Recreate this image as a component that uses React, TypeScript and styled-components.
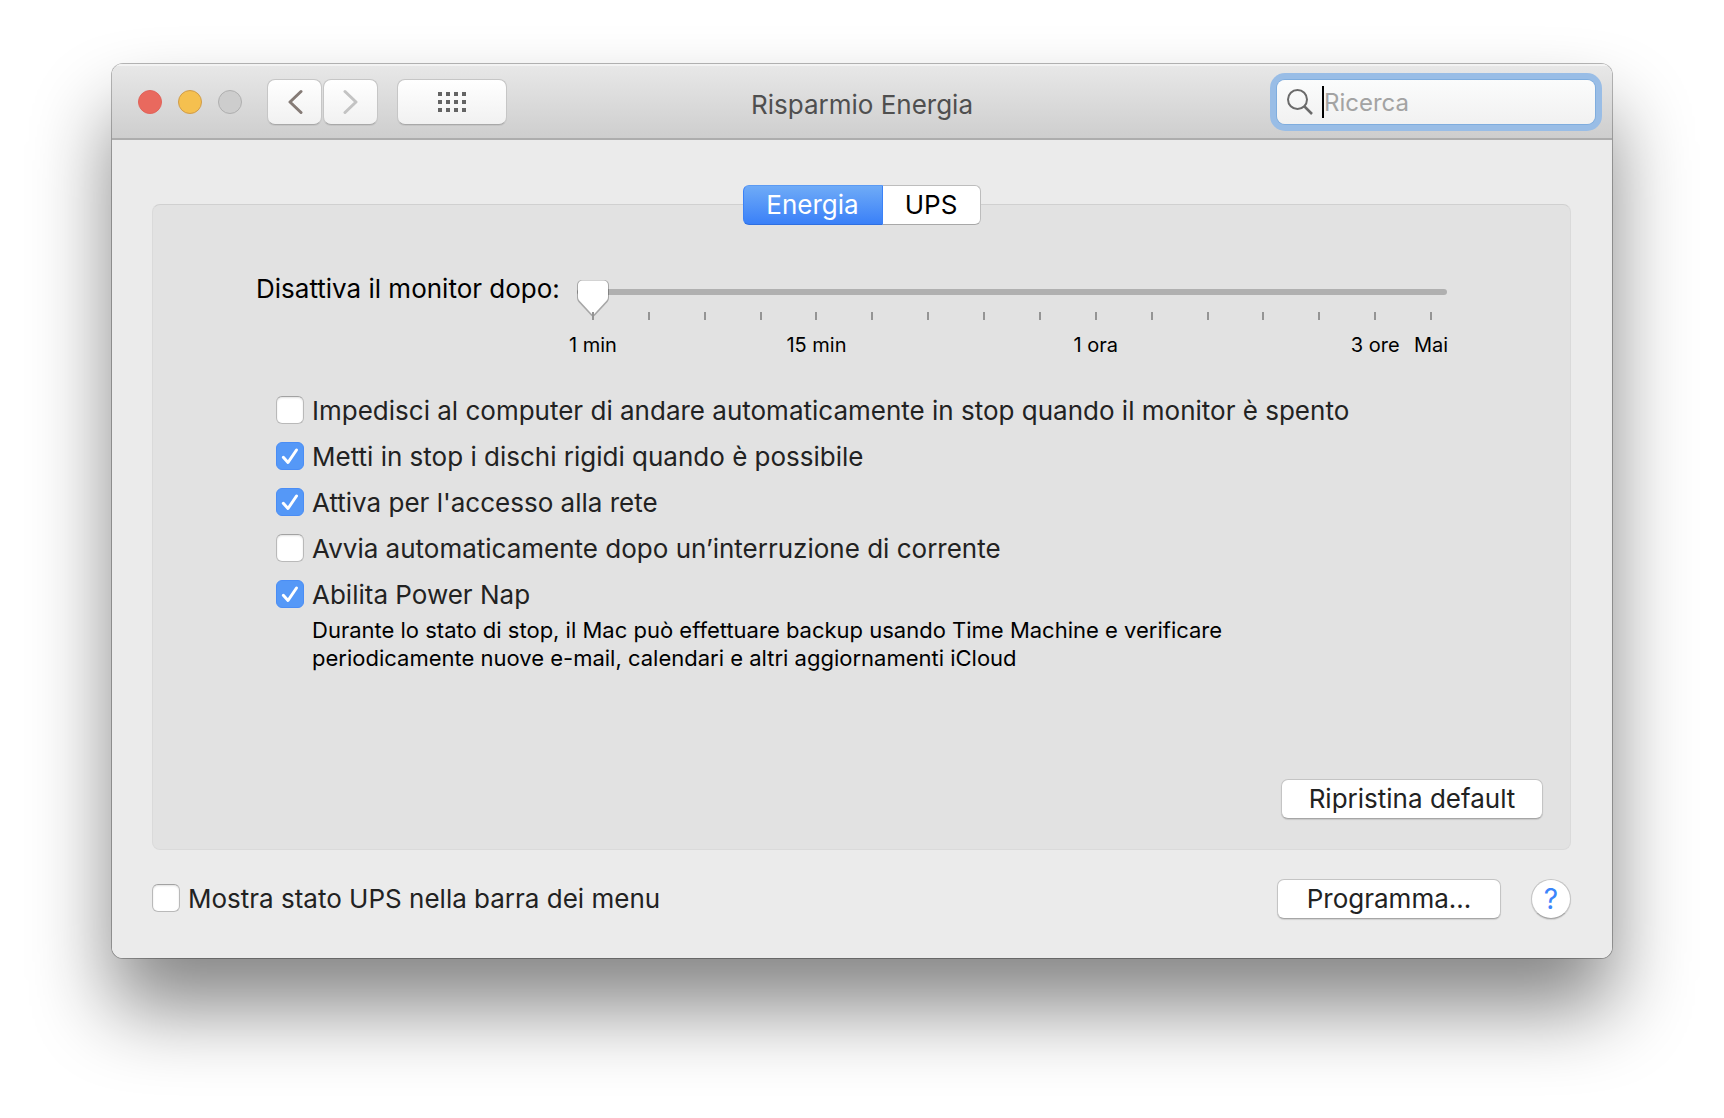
import React, { useState } from "react";
import styled, { createGlobalStyle, css } from "styled-components";

const GlobalStyle = createGlobalStyle`
  *, *::before, *::after { box-sizing: border-box; }
  body {
    margin: 0;
    background: #fff;
    font-family: Inter, "Liberation Sans", sans-serif;
    color: #222;
  }
  button, input { font-family: inherit; }
`;

const THUMB = encodeURIComponent(
  `<svg xmlns="http://www.w3.org/2000/svg" width="32" height="38" viewBox="0 0 32 38"><path d="M5 1h22a5 5 0 0 1 5 5v13q0 2-1.500 4L18 36.500q-2 2-4 0L1.500 23Q0 21 0 19V6a5 5 0 0 1 5-5z" fill="#000" fill-opacity=".26"/><path d="M5.500 1.500h21a4.500 4.500 0 0 1 4.500 4.500V18q0 2-1.300 3.500L17 35.200q-1 1-2 0L2.300 21.500Q1 20 1 18V6a4.500 4.500 0 0 1 4.500-4.500z" fill="#fff"/></svg>`
);

const Desktop = styled.div`
  min-height: 100vh;
  padding: 64px 112px 160px;
`;

const Window = styled.main`
  border-radius: 11px;
  background: #ebebeb;
  overflow: hidden;
`;

const WindowShadow = styled.div`
  border-radius: 11px;
  box-shadow: 0 0 0 1px rgba(0, 0, 0, 0.28), 0 50px 80px rgba(0, 0, 0, 0.48);
`;

const TitleBar = styled.header`
  display: grid;
  grid-template-columns: 1fr auto 1fr;
  align-items: center;
  height: 76px;
  padding: 2px 17px 0;
  background: linear-gradient(#e8e8e8, #cecece);
  border-bottom: 2px solid #adadad;
  box-shadow: inset 0 2px 0 #f3f3f3;
`;

const Group = styled.div<{ $gap: number }>`
  display: flex;
  align-items: center;
  gap: ${(p) => p.$gap}px;
`;

const Lights = styled(Group)`
  padding-left: 9px;
`;

const Light = styled.button<{ $fill: string; $edge: string }>`
  width: 24px;
  height: 24px;
  padding: 0;
  border: 1px solid ${(p) => p.$edge};
  border-radius: 50%;
  background: ${(p) => p.$fill};
`;

const NavButtons = styled.div`
  display: flex;
  gap: 1px;
  margin: 0 19px 0 25px;
`;

const ToolButton = styled.button<{ $wide?: boolean }>`
  display: flex;
  align-items: center;
  justify-content: center;
  width: ${(p) => (p.$wide ? 110 : 55)}px;
  height: 46px;
  padding: 0;
  border: 1px solid #c6c6c6;
  border-bottom-color: #a9a9a9;
  border-radius: 8px;
  background: linear-gradient(#fff, #f1f1f1);
  box-shadow: 0 1px 0 rgba(0, 0, 0, 0.06);
`;

const Title = styled.h1`
  margin: 0;
  padding-top: 6px;
  font-size: 26px;
  line-height: 32px;
  font-weight: 400;
  color: #4f4f4f;
`;

const SearchBox = styled.label`
  display: flex;
  align-items: center;
  justify-self: end;
  width: 318px;
  height: 44px;
  padding: 0 10px;
  border-radius: 8px;
  background: linear-gradient(#fbfcfc, #f1f1f1);
  box-shadow: 0 0 0 1px #7fadde, 0 0 0 7px #99bde6;
`;

const Caret = styled.span`
  flex: none;
  width: 2px;
  height: 32px;
  margin-left: 9px;
  background: #000;
`;

const SearchInput = styled.input`
  flex: 1;
  min-width: 0;
  padding: 2px 0 0;
  border: 0;
  outline: 0;
  background: none;
  font-size: 24px;
  line-height: 32px;
  color: #222;
  &::placeholder { color: #a3a3a3; opacity: 1; }
`;

const Body = styled.div`
  padding: 45px 41px 39px 40px;
`;

const Tabs = styled.div`
  position: relative;
  display: flex;
  width: max-content;
  margin: 0 auto -21px;
`;

const Tab = styled.button<{ $active: boolean }>`
  height: 40px;
  padding: 0;
  border: 1px solid #bdbdbd;
  border-bottom-color: #a8a8a8;
  background: #fff;
  font-size: 26px;
  line-height: 32px;
  color: #000;
  &:first-child { border-radius: 6px 0 0 6px; width: 140px; }
  &:last-child { border-radius: 0 6px 6px 0; width: 98px; border-left: 0; }
  ${(p) =>
    p.$active &&
    css`
      border-color: #5b9af3 #3b82f7 #2f6fe0;
      background: linear-gradient(#6fabf7, #3a80f8);
      color: #fff;
    `}
`;

const Panel = styled.section`
  display: flex;
  flex-direction: column;
  padding: 68px 27px 30px 103px;
  border: 1px solid #dadada;
  border-top-color: #d0d0d0;
  border-radius: 8px;
  background: #e2e2e2;
`;

const SliderRow = styled.div`
  display: flex;
  align-items: flex-start;
  gap: 19px;
  padding-right: 96px;
`;

const SliderLabel = styled.label`
  flex: none;
  width: 302px;
  font-size: 26px;
  line-height: 32px;
  white-space: nowrap;
  color: #000;
`;

const Slider = styled.div`
  flex: 1;
  min-width: 0;
`;

const Range = styled.input`
  display: block;
  appearance: none;
  width: 100%;
  height: 38px;
  margin: 0;
  background: none;
  &::-webkit-slider-runnable-track {
    height: 6px;
    border-radius: 3px;
    background: #b0b0b0;
  }
  &::-webkit-slider-thumb {
    appearance: none;
    width: 32px;
    height: 38px;
    margin-top: -10px;
    border: 0;
    background: url("data:image/svg+xml,${THUMB}") center / contain no-repeat;
  }
`;

const Marks = styled.div`
  display: grid;
  grid-template-columns: repeat(16, minmax(0, 1fr));
  margin: 1px -12px 0;
`;

const Mark = styled.span`
  display: flex;
  flex-direction: column;
  align-items: center;
  gap: 11px;
  font-size: 20px;
  line-height: 28px;
  white-space: nowrap;
  color: #000;
  &::before {
    content: "";
    width: 2px;
    height: 8px;
    background: #949494;
  }
`;

const Options = styled.div`
  display: flex;
  flex-direction: column;
  gap: 14px;
  margin: 36px 0 0 20px;
`;

const CheckLabel = styled.label`
  display: flex;
  align-items: center;
  gap: 8px;
  font-size: 26px;
  line-height: 32px;
  color: #222;
`;

const CheckWrap = styled.span`
  position: relative;
  display: flex;
  flex: none;
  margin-bottom: 2px;
  svg { position: absolute; inset: 0; pointer-events: none; }
`;

const CheckInput = styled.input`
  appearance: none;
  width: 28px;
  height: 28px;
  margin: 0;
  border: 1px solid #b9b9b9;
  border-top-color: #a2a2a2;
  border-radius: 6px;
  background: #fff;
  box-shadow: inset 0 1px 2px rgba(0, 0, 0, 0.12);
  &:checked {
    border-color: #4a8df5;
    background: #5598f7;
    box-shadow: none;
  }
`;

const Note = styled.p`
  max-width: 960px;
  margin: 5px 0 0 56px;
  font-size: 22px;
  line-height: 28px;
  color: #000;
`;

const PushButton = styled.button<{ $width: number }>`
  width: ${(p) => p.$width}px;
  height: 40px;
  padding: 0;
  border: 1px solid #c4c4c4;
  border-bottom-color: #a6a6a6;
  border-radius: 7px;
  background: #fff;
  box-shadow: 0 1px 1px rgba(0, 0, 0, 0.12);
  font-size: 26px;
  line-height: 32px;
  color: #222;
`;

const PanelActions = styled.div`
  display: flex;
  justify-content: flex-end;
  margin-top: 107px;
`;

const Footer = styled.footer`
  display: flex;
  align-items: center;
  justify-content: space-between;
  margin-top: 29px;
`;

const HelpButton = styled.button`
  width: 40px;
  height: 40px;
  padding: 0;
  border: 1px solid #c4c4c4;
  border-bottom-color: #a6a6a6;
  border-radius: 50%;
  background: #fff;
  box-shadow: 0 1px 1px rgba(0, 0, 0, 0.12);
  font-size: 28px;
  line-height: 32px;
  color: #3b85fb;
`;

function Check({ text, initial = false }: { text: string; initial?: boolean }) {
  const [on, setOn] = useState(initial);
  return (
    <CheckLabel>
      <CheckWrap>
        <CheckInput type="checkbox" checked={on} onChange={(e) => setOn(e.target.checked)} />
        {on && (
          <svg width="28" height="28" viewBox="0 0 28 28" fill="none">
            <path d="M7.300 15.300l4.700 5.200L20.500 8" stroke="#fff" strokeWidth="3" strokeLinecap="round" strokeLinejoin="round" />
          </svg>
        )}
      </CheckWrap>
      <span>{text}</span>
    </CheckLabel>
  );
}

function Chevron({ back, color }: { back?: boolean; color: string }) {
  return (
    <svg width="16" height="26" viewBox="0 0 16 26" fill="none">
      <path d={back ? "M14 2.500L3 13l11 10.500" : "M2 2.500L13 13 2 23.500"} stroke={color} strokeWidth="3" strokeLinecap="round" strokeLinejoin="round" />
    </svg>
  );
}

const marks: Record<number, string> = { 0: "1 min", 4: "15 min", 9: "1 ora", 14: "3 ore", 15: "Mai" };
const tabs = ["Energia", "UPS"];

export default function App() {
  const [tab, setTab] = useState(tabs[0]);
  const [delay, setDelay] = useState(0);
  return (
    <Desktop>
      <GlobalStyle />
      <WindowShadow>
        <Window>
          <TitleBar>
            <Group $gap={0}>
              <Lights $gap={16}>
                <Light aria-label="Chiudi" $fill="#e9695e" $edge="#e0635a" />
                <Light aria-label="Riduci" $fill="#f5c04f" $edge="#d09c4a" />
                <Light aria-label="Ingrandisci" $fill="#cdcdcd" $edge="#afafaf" />
              </Lights>
              <NavButtons>
                <ToolButton aria-label="Indietro"><Chevron back color="#857b76" /></ToolButton>
                <ToolButton aria-label="Avanti"><Chevron color="#c3c3c3" /></ToolButton>
              </NavButtons>
              <ToolButton $wide aria-label="Mostra tutte">
                <svg width="28" height="20" viewBox="0 0 28 20" fill="#646464">
                  {[0, 8, 16].map((y) => [0, 8, 16, 24].map((x) => <rect key={`${x}-${y}`} x={x} y={y} width="4" height="4" />))}
                </svg>
              </ToolButton>
            </Group>
            <Title>Risparmio Energia</Title>
            <SearchBox>
              <svg width="26" height="26" viewBox="0 0 26 26" fill="none" stroke="#6a6a6a" strokeWidth="2">
                <circle cx="10.500" cy="10.500" r="9.500" />
                <path d="M17 17l8 8" strokeWidth="2.500" />
              </svg>
              <Caret />
              <SearchInput type="text" aria-label="Ricerca" placeholder="Ricerca" />
            </SearchBox>
          </TitleBar>
          <Body>
            <Tabs role="tablist">
              {tabs.map((t) => (
                <Tab key={t} role="tab" aria-selected={t === tab} $active={t === tab} onClick={() => setTab(t)}>{t}</Tab>
              ))}
            </Tabs>
            <Panel>
              <SliderRow>
                <SliderLabel htmlFor="monitor-delay">Disattiva il monitor dopo:</SliderLabel>
                <Slider>
                  <Range id="monitor-delay" type="range" min={0} max={15} value={delay} onChange={(e) => setDelay(Number(e.target.value))} />
                  <Marks>
                    {Array.from({ length: 16 }, (_, i) => <Mark key={i}>{marks[i]}</Mark>)}
                  </Marks>
                </Slider>
              </SliderRow>
              <Options>
                <Check text="Impedisci al computer di andare automaticamente in stop quando il monitor è spento" />
                <Check initial text="Metti in stop i dischi rigidi quando è possibile" />
                <Check initial text="Attiva per l'accesso alla rete" />
                <Check text="Avvia automaticamente dopo un’interruzione di corrente" />
                <Check initial text="Abilita Power Nap" />
              </Options>
              <Note>
                Durante lo stato di stop, il Mac può effettuare backup usando Time Machine e verificare periodicamente nuove e-mail, calendari e altri aggiornamenti iCloud
              </Note>
              <PanelActions>
                <PushButton $width={262}>Ripristina default</PushButton>
              </PanelActions>
            </Panel>
            <Footer>
              <Check text="Mostra stato UPS nella barra dei menu" />
              <Group $gap={30}>
                <PushButton $width={224}>Programma...</PushButton>
                <HelpButton aria-label="Aiuto">?</HelpButton>
              </Group>
            </Footer>
          </Body>
        </Window>
      </WindowShadow>
    </Desktop>
  );
}
